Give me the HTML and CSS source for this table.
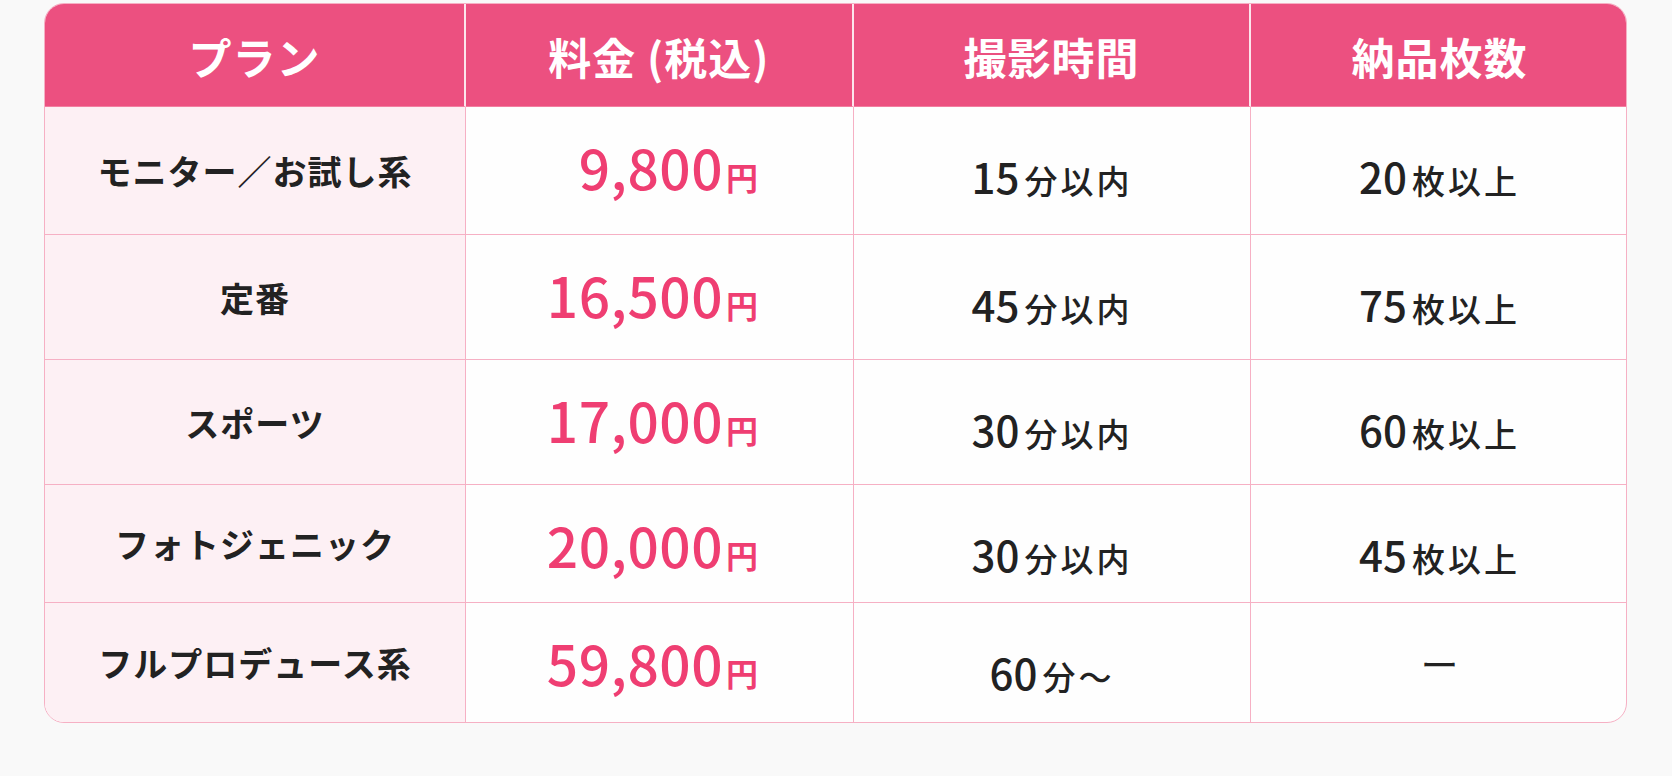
FILE: index.html
```html
<!DOCTYPE html>
<html lang="ja">
<head>
<meta charset="utf-8">
<link rel="stylesheet" href="styles.css">
</head>
<body>
<div class="page">
  <div class="table">
    <div class="cell head">プラン</div>
    <div class="cell head">料金 (税込)</div>
    <div class="cell head">撮影時間</div>
    <div class="cell head last-col">納品枚数</div>

    <div class="cell plan">モニター／お試し系</div>
    <div class="cell price"><span class="num">9,800</span><span class="yen">円</span></div>
    <div class="cell val"><span class="n">15</span><span class="k">分以内</span></div>
    <div class="cell val last-col"><span class="n">20</span><span class="k">枚以上</span></div>

    <div class="cell plan">定番</div>
    <div class="cell price"><span class="num">16,500</span><span class="yen">円</span></div>
    <div class="cell val"><span class="n">45</span><span class="k">分以内</span></div>
    <div class="cell val last-col"><span class="n">75</span><span class="k">枚以上</span></div>

    <div class="cell plan">スポーツ</div>
    <div class="cell price"><span class="num">17,000</span><span class="yen">円</span></div>
    <div class="cell val"><span class="n">30</span><span class="k">分以内</span></div>
    <div class="cell val last-col"><span class="n">60</span><span class="k">枚以上</span></div>

    <div class="cell plan">フォトジェニック</div>
    <div class="cell price"><span class="num">20,000</span><span class="yen">円</span></div>
    <div class="cell val"><span class="n">30</span><span class="k">分以内</span></div>
    <div class="cell val last-col"><span class="n">45</span><span class="k">枚以上</span></div>

    <div class="cell plan last-row">フルプロデュース系</div>
    <div class="cell price last-row"><span class="num">59,800</span><span class="yen">円</span></div>
    <div class="cell val last-row"><span class="n">60</span><span class="k">分〜</span></div>
    <div class="cell dash last-col last-row">ー</div>
  </div>
</div>
</body>
</html>
```

FILE: styles.css
```css
html, body {
  margin: 0;
  padding: 0;
  background: #f9f9f9;
}

body {
  font-family: "Noto Sans CJK JP", "Noto Sans", sans-serif;
  color: #222;
}

.page {
  padding: 3px 0 0 44px;
}

.table {
  display: grid;
  grid-template-columns: 421px 388px 397px 377px;
  grid-template-rows: 103px 128px 125px 125px 118px 119px;
  width: 1583px;
  box-sizing: border-box;
  border: 1.5px solid #f6b0c4;
  border-radius: 20px;
  overflow: hidden;
  background: #fefefe;
}

.cell {
  display: flex;
  align-items: center;
  justify-content: center;
  border-right: 1.5px solid #f6b0c4;
  border-bottom: 1.5px solid #f6b0c4;
}

.cell.last-col {
  border-right: none;
}

.cell.last-row {
  border-bottom: none;
}

.head {
  background: #ec5080;
  color: #fff;
  font-size: 43px;
  font-weight: 700;
  letter-spacing: 1px;
  border-right: 2px solid rgba(255, 255, 255, 0.85);
  border-bottom: 1.5px solid #f27ea0;
  padding-top: 2px;
  box-sizing: border-box;
}

.head.last-col {
  border-right: none;
}

.plan {
  background: #fdf0f4;
  font-size: 34px;
  font-weight: 700;
  color: #222;
  letter-spacing: 1px;
}

.price {
  justify-content: flex-end;
  padding-right: 95px;
  color: #ef3e72;
  align-items: baseline;
  padding-top: 32px;
  box-sizing: border-box;
}

.price .num {
  font-size: 55px;
  font-weight: 500;
  letter-spacing: 0.5px;
  line-height: 1;
}

.price .yen {
  font-size: 32px;
  font-weight: 700;
  margin-left: 3px;
}

.val {
  align-items: baseline;
  padding-top: 48px;
  box-sizing: border-box;
  color: #222;
}

.val .n {
  font-size: 42px;
  font-weight: 500;
  line-height: 1;
  margin-right: 5px;
}

.val .k {
  font-size: 33px;
  font-weight: 500;
  letter-spacing: 3px;
  line-height: 1;
}

.dash {
  font-size: 38px;
  font-weight: 400;
  color: #222;
}
```
